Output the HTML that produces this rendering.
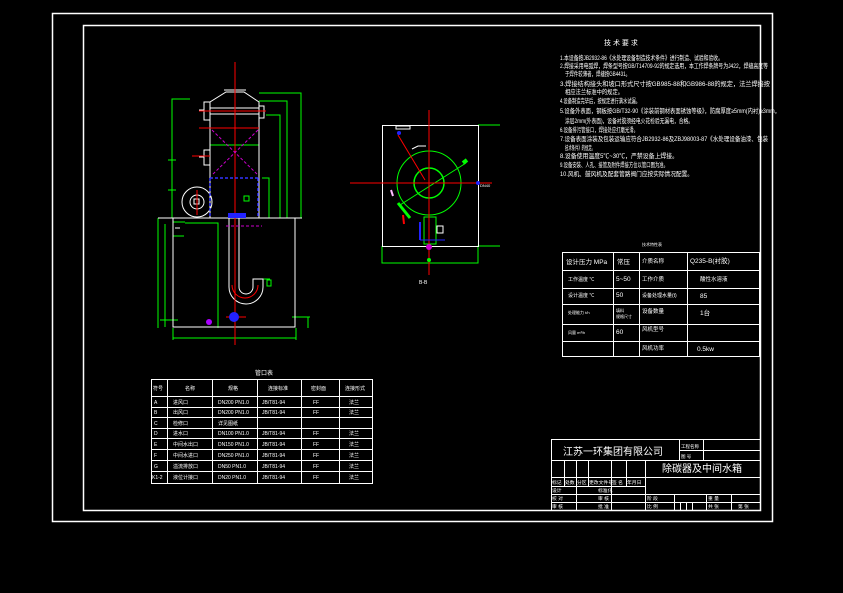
<!DOCTYPE html>
<html><head><meta charset="utf-8"><style>
html,body{margin:0;padding:0;background:#000;width:843px;height:593px;overflow:hidden}
svg{display:block}
text{font-family:"Liberation Sans","Noto Sans CJK SC",sans-serif;fill:#fff}
</style></head><body>
<svg width="843" height="593" viewBox="0 0 843 593" xmlns="http://www.w3.org/2000/svg">
<rect width="843" height="593" fill="#000"/>
<rect x="52.5" y="13.5" width="720" height="508" fill="none" stroke="#fff" stroke-width="1.5"/>
<rect x="83.5" y="25.5" width="677" height="485" fill="none" stroke="#fff" stroke-width="1.5"/>

<g fill="none" stroke-width="1">
<g stroke="#0f0">
<polyline points="190,99 172,99 172,218"/>
<line x1="168" y1="160" x2="176" y2="160"/>
<line x1="168" y1="190" x2="176" y2="190"/>
<polyline points="259,93 301,93 301,218"/>
<polyline points="259,101 287,101 287,218"/>
<polyline points="266,115 280,115 280,218"/>
<polyline points="262,178 269,178 269,218"/>
<line x1="210" y1="145" x2="259" y2="145"/>
<polyline points="158,218 158,328"/>
<polyline points="165,224 165,327"/>
<line x1="173" y1="222" x2="185" y2="222"/>
<line x1="173" y1="236" x2="184" y2="236"/>
<polyline points="185,223 218,223 218,328"/>
<line x1="173" y1="338" x2="296" y2="338"/>
<line x1="173" y1="328" x2="173" y2="340"/>
<line x1="296" y1="328" x2="296" y2="340"/>
<line x1="292" y1="317" x2="310" y2="317"/>
<line x1="308" y1="317" x2="308" y2="328"/>
<line x1="262" y1="279" x2="270" y2="279"/>
<rect x="267" y="280" width="4" height="6"/>
<line x1="160" y1="320" x2="178" y2="320"/>
</g>
<g stroke="#fff">
<polyline points="210,218 210,102 226,92 244,92 259,102 259,218"/>
<line x1="224" y1="90" x2="246" y2="90"/>
<line x1="210" y1="108" x2="259" y2="108"/>
<line x1="210" y1="114" x2="259" y2="114"/>
<line x1="158" y1="218" x2="302" y2="218"/>
<rect x="173" y="218" width="122" height="109"/>
<path d="M229,218 V287 A17,17 0 0 0 263,287 V279 H253 V287 A7,7 0 0 1 239,287 V218"/>
<circle cx="197" cy="202" r="15"/>
<circle cx="197" cy="202" r="7"/>
<rect x="194" y="199" width="5" height="5"/>
<rect x="204" y="102" width="6" height="18"/>
<rect x="204" y="150" width="6" height="15"/>
<line x1="199" y1="110" x2="204" y2="110"/>
<line x1="199" y1="157" x2="204" y2="157"/>
<rect x="259" y="106" width="5" height="12"/>
<rect x="244" y="196" width="5" height="5" stroke="#0f0"/>
<line x1="175" y1="228" x2="180" y2="228"/>
</g>
<g stroke="#f00">
<line x1="235" y1="62" x2="235" y2="345"/>
<line x1="199" y1="111" x2="266" y2="111"/>
<line x1="192" y1="156" x2="210" y2="156"/>
<line x1="199" y1="128" x2="259" y2="128"/>
<path d="M232,285 A8,8 0 0 0 258,285" />
<line x1="197" y1="190" x2="197" y2="215"/>
<line x1="226" y1="317" x2="246" y2="317"/>
</g>
<g stroke="#c0c" stroke-dasharray="3,2">
<line x1="212" y1="130" x2="258" y2="175"/>
<line x1="258" y1="130" x2="212" y2="175"/>
<line x1="226" y1="226" x2="262" y2="226"/>
</g>
<g stroke="#33f" stroke-dasharray="3,2" stroke-width="1.5">
<line x1="210" y1="178" x2="259" y2="178"/>
<line x1="258" y1="178" x2="258" y2="218"/>
<line x1="210" y1="178" x2="210" y2="218"/>
</g>
<circle cx="234" cy="317" r="5" fill="#22f" stroke="none"/>
<circle cx="209" cy="322" r="3" fill="#a0f" stroke="none"/>
<rect x="228" y="213" width="18" height="5" fill="#22f" stroke="none"/>
</g>

<g fill="none" stroke-width="1">
<g stroke="#0f0">
<polyline points="478,125 500,125"/>
<polyline points="382,246 382,263 478,263 478,246 500,246"/>
<circle cx="429" cy="183" r="32"/>
<circle cx="429" cy="183" r="15" stroke-width="1.5"/>
<line x1="400" y1="205" x2="466" y2="163"/>
<rect x="424" y="217" width="12" height="27"/>
<line x1="398" y1="203" x2="410" y2="218" stroke-width="3"/>
<line x1="463" y1="163" x2="467" y2="160" stroke-width="4"/>
</g>
<rect x="382.5" y="125.5" width="96" height="121" stroke="#fff"/>
<g stroke="#f00">
<line x1="350" y1="183" x2="492" y2="183"/>
<line x1="429" y1="110" x2="429" y2="275"/>
<line x1="398" y1="135" x2="425" y2="180"/>
</g>
<line x1="420" y1="222" x2="420" y2="240" stroke="#22f" stroke-width="2"/>
<line x1="420" y1="240" x2="445" y2="240" stroke="#22f"/>
<rect x="437" y="226" width="6" height="7" stroke="#fff"/>
<rect x="396" y="126" width="14" height="3" stroke="#fff"/>
<circle cx="399" cy="133" r="2" fill="#22f" stroke="none"/>
<circle cx="478" cy="183" r="2" fill="#22f" stroke="none"/>
<circle cx="429" cy="247" r="3" fill="#c0c" stroke="none"/>
<circle cx="429" cy="260" r="2" fill="#0f0" stroke="none"/>
<line x1="391" y1="190" x2="393" y2="196" stroke="#fbf" stroke-width="2"/>
<line x1="403" y1="215" x2="404" y2="224" stroke="#f00" stroke-width="2"/>
<path d="M412,149 L418,146 L426,146" stroke="#fff"/>
</g>
<text x="419" y="284" font-size="5">B-B</text>
<text x="480" y="187" font-size="4">DN40</text>

<g font-size="6.5" lengthAdjust="spacingAndGlyphs">
<text x="604" y="45" font-size="7">技 术 要 求</text>
<text x="560" y="60" textLength="163" lengthAdjust="spacingAndGlyphs">1.本设备按JB2932-86《水处理设备制造技术条件》进行制造、试验和验收。</text>
<text x="560" y="68" textLength="208" lengthAdjust="spacingAndGlyphs">2.焊接采用电弧焊，焊条型号按GB/T14709-92的规定选用，本工作焊条牌号为J422，焊缝高度等</text>
<text x="565" y="76" textLength="65" lengthAdjust="spacingAndGlyphs">于焊件较薄者，焊缝按GB4431。</text>
<text x="560" y="86" textLength="210" lengthAdjust="spacingAndGlyphs">3.焊接结构接头和坡口形式尺寸按GB985-88和GB986-88的规定，法兰焊接按</text>
<text x="565" y="94" textLength="58" lengthAdjust="spacingAndGlyphs">相应法兰标准中的规定。</text>
<text x="560" y="103" textLength="80" lengthAdjust="spacingAndGlyphs">4.设备制造完毕后，按规定进行满水试漏。</text>
<text x="560" y="113" textLength="220" lengthAdjust="spacingAndGlyphs">5.设备外表面，钢板按GB/T32-90《涂装前钢材表面锈蚀等级》，防腐厚度≥5mm(内衬)≥3mm，</text>
<text x="565" y="123" textLength="128" lengthAdjust="spacingAndGlyphs">涂层2mm(外表面)，设备衬胶须经电火花检验无漏电，合格。</text>
<text x="560" y="132" textLength="78" lengthAdjust="spacingAndGlyphs">6.设备排污管接口，焊接处应打磨光滑。</text>
<text x="560" y="141" textLength="208" lengthAdjust="spacingAndGlyphs">7.设备表面涂装及包装运输应符合JB2932-86及ZBJ98003-87《水处理设备油漆、包装</text>
<text x="565" y="150" textLength="30" lengthAdjust="spacingAndGlyphs">技术条件》的规定。</text>
<text x="560" y="158" textLength="118" lengthAdjust="spacingAndGlyphs">8.设备使用温度5℃~30℃，严禁设备上焊接。</text>
<text x="560" y="167" textLength="108" lengthAdjust="spacingAndGlyphs">9.设备安装、人孔、接管及附件焊接方位以管口图为准。</text>
<text x="560" y="176" textLength="133" lengthAdjust="spacingAndGlyphs">10.风机、鼓风机及配套管路阀门应按实际情况配置。</text>
</g>

<text x="642" y="246" font-size="4">技术特性表</text>
<g stroke="#fff" fill="none" stroke-width="1">
<rect x="562.5" y="252.5" width="197" height="104"/>
<line x1="562" y1="270.5" x2="760" y2="270.5"/>
<line x1="562" y1="288.5" x2="760" y2="288.5"/>
<line x1="562" y1="304.5" x2="760" y2="304.5"/>
<line x1="562" y1="324.5" x2="760" y2="324.5"/>
<line x1="562" y1="341.5" x2="760" y2="341.5"/>
<line x1="613.5" y1="252" x2="613.5" y2="357"/>
<line x1="639.5" y1="252" x2="639.5" y2="357"/>
<line x1="687.5" y1="252" x2="687.5" y2="357"/>
</g>
<g font-size="6.5">
<text x="566" y="264">设计压力 MPa</text><text x="617" y="264">常压</text><text x="642" y="263" font-size="5.5">介质名称</text><text x="690" y="263">Q235-B(衬胶)</text>
<text x="568" y="281" font-size="5">工作温度 ℃</text><text x="616" y="281">5~50</text><text x="642" y="281" font-size="5.5">工作介质</text><text x="700" y="281" font-size="5.5">酸性水溶液</text>
<text x="568" y="297" font-size="5">设计温度 ℃</text><text x="616" y="297">50</text><text x="642" y="297" font-size="5">设备处理水量(t)</text><text x="700" y="298">85</text>
<text x="568" y="314" font-size="4">处理能力 t/h</text><text x="616" y="312" font-size="4">填料</text><text x="616" y="318" font-size="4">规格尺寸</text><text x="642" y="313" font-size="5.5">设备数量</text><text x="700" y="315">1台</text>
<text x="568" y="334" font-size="4">风量 m³/h</text><text x="616" y="334">60</text><text x="642" y="331" font-size="5.5">风机型号</text>
<text x="642" y="350" font-size="5.5">风机功率</text><text x="697" y="351">0.5kw</text>
</g>

<g stroke="#fff" fill="none" stroke-width="1">
<rect x="551.5" y="439.5" width="209" height="71"/>
<line x1="551" y1="460.5" x2="761" y2="460.5"/>
<line x1="679.5" y1="439" x2="679.5" y2="460"/>
<line x1="703.5" y1="439" x2="703.5" y2="460"/>
<line x1="679" y1="450.5" x2="761" y2="450.5"/>
<line x1="551" y1="477.5" x2="761" y2="477.5"/>
<line x1="551" y1="486.5" x2="645" y2="486.5"/>
<line x1="551" y1="494.5" x2="761" y2="494.5"/>
<line x1="551" y1="502.5" x2="761" y2="502.5"/>
<line x1="564.5" y1="460" x2="564.5" y2="486"/>
<line x1="576.5" y1="460" x2="576.5" y2="510"/>
<line x1="588.5" y1="460" x2="588.5" y2="486"/>
<line x1="611.5" y1="460" x2="611.5" y2="510"/>
<line x1="626.5" y1="460" x2="626.5" y2="486"/>
<line x1="645.5" y1="460" x2="645.5" y2="510"/>
<line x1="674.5" y1="494" x2="674.5" y2="510"/>
<line x1="680.5" y1="502" x2="680.5" y2="510"/>
<line x1="686.5" y1="502" x2="686.5" y2="510"/>
<line x1="692.5" y1="502" x2="692.5" y2="510"/>
<line x1="706.5" y1="494" x2="706.5" y2="510"/>
<line x1="731.5" y1="494" x2="731.5" y2="510"/>
</g>
<text x="563" y="455" font-size="10">江苏一环集团有限公司</text>
<text x="681" y="448" font-size="4.5">工程名称</text>
<text x="681" y="458" font-size="4.5">图 号</text>
<text x="662" y="472" font-size="10">除碳器及中间水箱</text>
<g font-size="4.8">
<text x="552" y="484">标记</text><text x="565" y="484">处数</text><text x="577" y="484">分区</text><text x="589" y="484">更改文件号</text><text x="612" y="484">签 名</text><text x="627" y="484">年月日</text>
<text x="552" y="492">设计</text><text x="598" y="492">标准化</text>
<text x="552" y="500">校 对</text><text x="598" y="500">审 核</text><text x="647" y="500">阶 段</text><text x="708" y="500">重 量</text>
<text x="552" y="508">审 核</text><text x="598" y="508">批 准</text><text x="647" y="508">比 例</text><text x="708" y="508">共 张</text><text x="738" y="508">第 张</text>
</g>

<text x="255" y="375" font-size="6">管口表</text>
<g stroke="#fff" fill="none" stroke-width="1">
<rect x="151.5" y="379.5" width="221" height="104"/>
<line x1="151" y1="396.5" x2="372" y2="396.5"/>
<line x1="151" y1="407.5" x2="372" y2="407.5"/>
<line x1="151" y1="417.5" x2="372" y2="417.5"/>
<line x1="151" y1="428.5" x2="372" y2="428.5"/>
<line x1="151" y1="438.5" x2="372" y2="438.5"/>
<line x1="151" y1="449.5" x2="372" y2="449.5"/>
<line x1="151" y1="460.5" x2="372" y2="460.5"/>
<line x1="151" y1="471.5" x2="372" y2="471.5"/>
<line x1="167.5" y1="379" x2="167.5" y2="483"/>
<line x1="212.5" y1="379" x2="212.5" y2="483"/>
<line x1="257.5" y1="379" x2="257.5" y2="483"/>
<line x1="301.5" y1="379" x2="301.5" y2="483"/>
<line x1="339.5" y1="379" x2="339.5" y2="483"/>
</g>
<g font-size="5">
<text x="153" y="390">符号</text><text x="185" y="390">名称</text><text x="228" y="390">规格</text><text x="268" y="390">连接标准</text><text x="311" y="390">密封面</text><text x="345" y="390">连接形式</text>
<text x="154" y="404">A</text><text x="173" y="404">进风口</text><text x="218" y="404">DN200 PN1.0</text><text x="262" y="404">JB/T81-94</text><text x="313" y="404">FF</text><text x="349" y="404">法兰</text>
<text x="154" y="414">B</text><text x="173" y="414">出风口</text><text x="218" y="414">DN200 PN1.0</text><text x="262" y="414">JB/T81-94</text><text x="313" y="414">FF</text><text x="349" y="414">法兰</text>
<text x="154" y="425">C</text><text x="173" y="425">检修口</text><text x="218" y="425">详见图纸</text>
<text x="154" y="435">D</text><text x="173" y="435">进水口</text><text x="218" y="435">DN100 PN1.0</text><text x="262" y="435">JB/T81-94</text><text x="313" y="435">FF</text><text x="349" y="435">法兰</text>
<text x="154" y="446">E</text><text x="173" y="446">中间水出口</text><text x="218" y="446">DN150 PN1.0</text><text x="262" y="446">JB/T81-94</text><text x="313" y="446">FF</text><text x="349" y="446">法兰</text>
<text x="154" y="457">F</text><text x="173" y="457">中间水进口</text><text x="218" y="457">DN250 PN1.0</text><text x="262" y="457">JB/T81-94</text><text x="313" y="457">FF</text><text x="349" y="457">法兰</text>
<text x="154" y="468">G</text><text x="173" y="468">溢流排放口</text><text x="218" y="468">DN50 PN1.0</text><text x="262" y="468">JB/T81-94</text><text x="313" y="468">FF</text><text x="349" y="468">法兰</text>
<text x="152" y="479">K1-2</text><text x="173" y="479">液位计接口</text><text x="218" y="479">DN20 PN1.0</text><text x="262" y="479">JB/T81-94</text><text x="313" y="479">FF</text><text x="349" y="479">法兰</text>
</g>
</svg>
</body></html>
